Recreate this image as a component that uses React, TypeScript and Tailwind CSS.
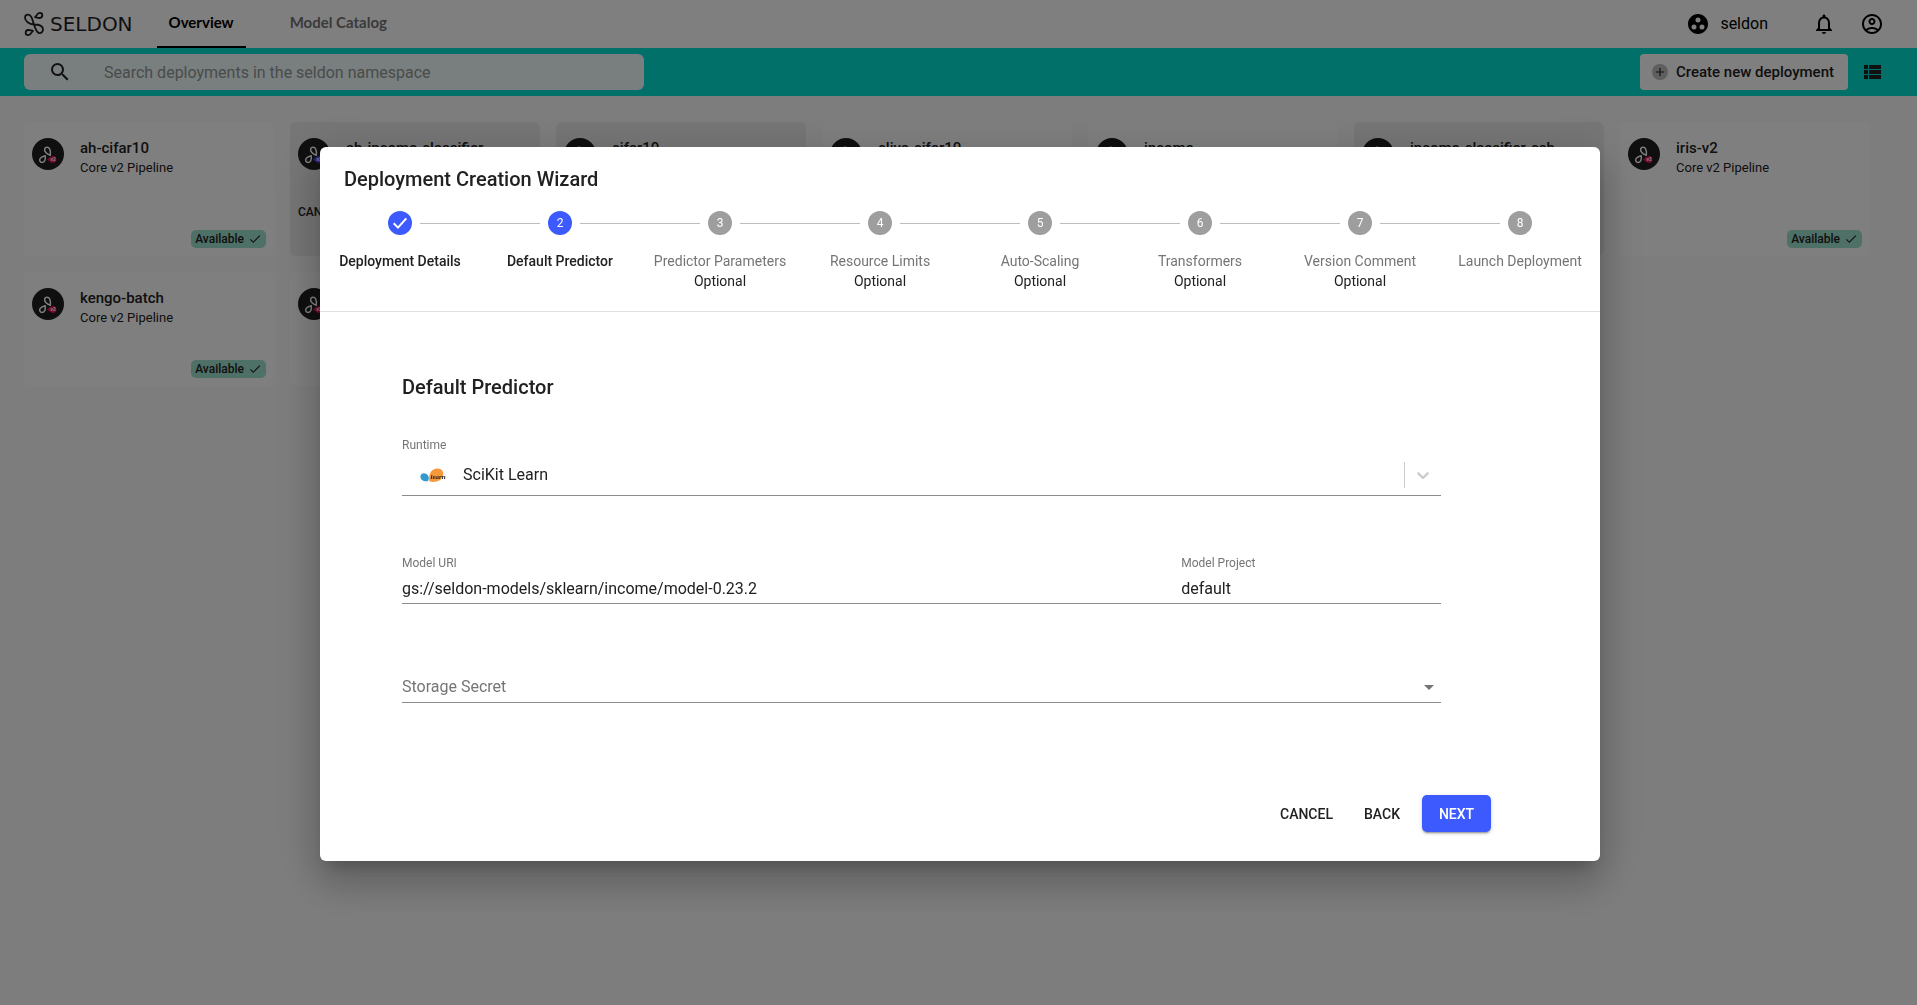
import { useState } from 'react';
import {
  MdAdd,
  MdArrowDropDown,
  MdCheck,
  MdGroupWork,
  MdNotificationsNone,
  MdOutlineAccountCircle,
  MdSearch,
} from 'react-icons/md';

type Deployment = {
  name: string;
  kind: string;
  accent: string;
  shaded?: boolean;
  canary?: boolean;
};

const DEPLOYMENTS: Deployment[] = [
  { name: 'ah-cifar10', kind: 'Core v2 Pipeline', accent: '#e8145a' },
  { name: 'ah-income-classifier', kind: 'Seldon Deployment', accent: '#4a4aff', shaded: true, canary: true },
  { name: 'cifar10', kind: 'Seldon Deployment', accent: '#4a4aff', shaded: true },
  { name: 'clive-cifar10', kind: 'Core v2 Pipeline', accent: '#e8145a' },
  { name: 'income', kind: 'Core v2 Pipeline', accent: '#e8145a' },
  { name: 'income-classifier-csh', kind: 'Seldon Deployment', accent: '#4a4aff', shaded: true },
  { name: 'iris-v2', kind: 'Core v2 Pipeline', accent: '#e8145a' },
  { name: 'kengo-batch', kind: 'Core v2 Pipeline', accent: '#e8145a' },
  { name: 'kengo', kind: 'Core v2 Pipeline', accent: '#e8145a' },
];

const STEPS = [
  { label: 'Deployment Details', optional: false },
  { label: 'Default Predictor', optional: false },
  { label: 'Predictor Parameters', optional: true },
  { label: 'Resource Limits', optional: true },
  { label: 'Auto-Scaling', optional: true },
  { label: 'Transformers', optional: true },
  { label: 'Version Comment', optional: true },
  { label: 'Launch Deployment', optional: false },
];

function Logo() {
  return (
    <a href="#" className="flex items-center gap-1.5 text-[#1f1f1f]">
      <svg width="20" height="24" viewBox="0 0 20 24" fill="none" stroke="currentColor" strokeWidth="1.8">
        <path d="M10.5 5.2C13.5 4.4 12.4 .9 15.7 .9C19.2 .9 19.2 5.6 15.7 6C13.6 6.1 12.6 5.2 10.5 5.2Z" />
        <path d="M10 12.5C5 12.5 1 9 1 5.5C1 2.8 3.5 2 5.5 3C8.5 4.6 8.5 9 10 12.5C11.5 17 12.3 20.5 15 21C17.5 21.4 19 19.5 19 17.5C19 14 15 12.5 10 12.5Z" />
        <path d="M9.5 18.9C6.5 19.8 7.6 23.1 4.3 23.1C.8 23.1 .8 18.4 4.3 18C6.4 17.9 7.4 18.8 9.5 18.9Z" />
      </svg>
      <span className="font-['DejaVu_Sans',sans-serif] text-[20px] leading-6">SELDON</span>
    </a>
  );
}

function PipelineIcon({ accent }: { accent: string }) {
  return (
    <svg width="32" height="32" viewBox="0 0 32 32" className="shrink-0">
      <circle cx="16" cy="16" r="16" fill="#1f1f1f" />
      <g fill="none" stroke="#fff" strokeWidth="1.5" strokeLinejoin="round">
        <path d="M18.3 17.2C14.6 16 12 13.2 12.7 10.8C13.4 8.6 16.6 8.7 17.7 11C18.4 12.6 18.5 15 18.3 17.2Z" />
        <path d="M13.2 17.7C13.9 21.6 12.6 24.4 10.2 24.4C7.8 24.4 7 22 8.2 20.4C9.2 19 11.2 18.1 13.2 17.7Z" />
      </g>
      <path d="M15 21.5C17 20.4 18.4 18 21 18C23.2 18 24.4 19.6 24.4 21.5C24.4 23.4 23.2 25 21 25C18.4 25 17 22.6 15 21.5Z" fill={accent} />
      <text x="18.4" y="23.2" fontSize="5" fontWeight="700" fill="#fff">v2</text>
    </svg>
  );
}

function ScikitIcon() {
  return (
    <svg width="27" height="15" viewBox="0 0 27 15" className="shrink-0">
      <path d="M1.3 6.3C3.4 4.2 6.8 5.4 8.2 7.8C9.3 9.8 8.8 11.8 8 13C5.6 13.8 2.8 13 1.3 11.2C0 9.4 .1 7.6 1.3 6.3Z" fill="#3499cd" />
      <path d="M9.4 13.2C8.6 9 9.6 4.6 12.4 2.2C15.6-.4 20.4-.2 22.4 2.8C24.6 6.2 22.6 10.8 19.2 12.6C16.2 14.2 11.8 14.2 9.4 13.2Z" fill="#f89939" />
      <text x="10.5" y="10.8" fontSize="7" fontWeight="700" fontStyle="italic" fontFamily="Liberation Serif, serif" fill="#1f1f1f">learn</text>
    </svg>
  );
}

function DeploymentCard({ deployment }: { deployment: Deployment }) {
  return (
    <article
      className={`flex min-h-[114px] flex-col rounded-md px-2 pt-4 pb-2 ${
        deployment.shaded ? 'bg-[#ececec]' : 'bg-white'
      }`}
    >
      <div className="flex h-[42px] gap-4">
        <PipelineIcon accent={deployment.accent} />
        <div>
          <h2 className="mb-0.5 text-[15px] leading-5 font-medium whitespace-nowrap">{deployment.name}</h2>
          <p className="text-[13px] leading-4">{deployment.kind}</p>
        </div>
      </div>
      {deployment.canary && <p className="mt-[22px] mb-2 text-xs leading-5 font-medium">CANARY</p>}
      <span className="mt-auto flex items-center gap-1 self-end rounded-[5px] bg-[#9ee0cc] px-1 text-xs leading-[18px] font-medium">
        Available
        <MdCheck size={14} />
      </span>
    </article>
  );
}

function Stepper({ active }: { active: number }) {
  return (
    <ol className="grid grid-cols-8">
      {STEPS.map((step, i) => {
        const reached = i <= active;
        return (
          <li key={step.label} className="flex flex-col items-center">
            <div className="flex w-full items-center gap-2">
              <span className={`h-px flex-1 ${i > 0 ? 'bg-[#bdbdbd]' : ''}`} />
              <span
                className={`flex size-6 items-center justify-center rounded-full text-xs text-white ${
                  reached ? 'bg-[#3d5afe]' : 'bg-[#9e9e9e]'
                }`}
              >
                {i < active ? (
                  <svg width="24" height="24" viewBox="0 0 24 24" fill="none" stroke="currentColor" strokeWidth="2">
                    <path d="M5.7 12.3L10 16.6L18.3 7.4" />
                  </svg>
                ) : (
                  i + 1
                )}
              </span>
              <span className={`h-px flex-1 ${i < STEPS.length - 1 ? 'bg-[#bdbdbd]' : ''}`} />
            </div>
            <span className={`mt-4 text-sm leading-5 ${reached ? 'font-medium' : 'text-[#757575]'}`}>{step.label}</span>
            {step.optional && <span className="text-sm leading-5">Optional</span>}
          </li>
        );
      })}
    </ol>
  );
}

function Wizard() {
  const [runtime, setRuntime] = useState('sklearn');
  const [modelUri, setModelUri] = useState('gs://seldon-models/sklearn/income/model-0.23.2');
  const [project, setProject] = useState('default');
  const [secret, setSecret] = useState('');

  return (
    <section
      role="dialog"
      aria-labelledby="wizard-title"
      className="w-full max-w-[1280px] rounded-md bg-white shadow-[0_11px_15px_-7px_rgba(0,0,0,0.2),0_24px_38px_3px_rgba(0,0,0,0.14),0_9px_46px_8px_rgba(0,0,0,0.12)]"
    >
      <header className="border-b border-[#e0e0e0] pt-4 pb-5">
        <h1 id="wizard-title" className="mb-4 px-6 text-xl leading-8 font-medium">
          Deployment Creation Wizard
        </h1>
        <Stepper active={1} />
      </header>

      <form className="pr-[109px] pb-[29px] pl-[82px]" onSubmit={(e) => e.preventDefault()}>
        <div className="mr-[50px] pt-[59px]">
          <h2 className="text-xl leading-8 font-medium">Default Predictor</h2>

          <div className="mt-8 border-b border-[#8c8c8c]">
            <label htmlFor="runtime" className="block text-xs leading-5 text-[#757575]">Runtime</label>
            <div className="relative flex h-10 items-center pl-[18px]">
              <ScikitIcon />
              <select
                id="runtime"
                value={runtime}
                onChange={(e) => setRuntime(e.target.value)}
                className="h-full flex-1 appearance-none pl-4 text-base outline-none"
              >
                <option value="sklearn">SciKit Learn</option>
              </select>
              <div className="pointer-events-none absolute right-0 flex h-[26px] items-center border-l border-[#ccc] px-2">
                <svg width="20" height="20" viewBox="0 0 20 20" fill="#ccc">
                  <path d="M4.516 7.548c0.436-0.446 1.043-0.481 1.576 0l3.908 3.747 3.908-3.747c0.533-0.481 1.141-0.446 1.574 0 0.436 0.445 0.408 1.197 0 1.615-0.406 0.418-4.695 4.502-4.695 4.502-0.217 0.223-0.502 0.335-0.787 0.335s-0.57-0.112-0.789-0.335c0 0-4.287-4.084-4.695-4.502s-0.436-1.17 0-1.615z" />
                </svg>
              </div>
            </div>
          </div>

          <div className="mt-[57px] grid grid-cols-4 border-b border-[#8c8c8c]">
            <div className="col-span-3">
              <label htmlFor="model-uri" className="block text-xs leading-5 text-[#757575]">Model URI</label>
              <input
                id="model-uri"
                value={modelUri}
                onChange={(e) => setModelUri(e.target.value)}
                className="block h-[30px] w-full text-base outline-none"
              />
            </div>
            <div>
              <label htmlFor="model-project" className="block text-xs leading-5 text-[#757575]">Model Project</label>
              <input
                id="model-project"
                value={project}
                onChange={(e) => setProject(e.target.value)}
                className="block h-[30px] w-full text-base outline-none"
              />
            </div>
          </div>

          <div className="relative mt-[68px] flex items-center border-b border-[#8c8c8c]">
            <select
              aria-label="Storage Secret"
              value={secret}
              onChange={(e) => setSecret(e.target.value)}
              className="h-[30px] w-full appearance-none text-base text-[#757575] outline-none"
            >
              <option value="">Storage Secret</option>
            </select>
            <MdArrowDropDown size={24} className="pointer-events-none absolute right-0 text-[#757575]" />
          </div>
        </div>

        <div className="mt-[92px] flex items-center justify-end gap-2 text-sm font-medium">
          <button type="button" className="h-[37px] min-w-[71px] px-2">CANCEL</button>
          <button type="button" className="h-[37px] min-w-16 px-2">BACK</button>
          <button
            type="submit"
            className="h-[37px] min-w-[69px] rounded-[5px] bg-[#3d5afe] px-4 text-white shadow-[0_3px_1px_-2px_rgba(0,0,0,0.2),0_2px_2px_0_rgba(0,0,0,0.14),0_1px_5px_0_rgba(0,0,0,0.12)]"
          >
            NEXT
          </button>
        </div>
      </form>
    </section>
  );
}

export default function App() {
  const [query, setQuery] = useState('');

  return (
    <div className="min-h-screen bg-[#fafafa] font-['Roboto',sans-serif] text-[#212121]">
      <header className="flex h-12 items-center bg-white pr-[33px] pl-6">
        <Logo />
        <nav className="ml-6 flex h-full font-['Lato',sans-serif] text-[15px] font-bold">
          <a href="#" className="flex items-center border-b-2 border-black px-3 pb-0.5 text-black">Overview</a>
          <a href="#" className="ml-8 flex items-center border-b-2 border-transparent px-3 pb-0.5 text-[#757575]">
            Model Catalog
          </a>
        </nav>
        <div className="ml-auto flex items-center text-black">
          <MdGroupWork size={24} />
          <span className="ml-2.5 text-base">seldon</span>
          <button aria-label="Notifications" className="ml-11">
            <MdNotificationsNone size={24} />
          </button>
          <button aria-label="Account" className="ml-6">
            <MdOutlineAccountCircle size={24} />
          </button>
        </div>
      </header>

      <div className="flex h-12 items-center bg-[#00e1d2] pr-[33px] pl-6">
        <label className="flex h-9 w-full max-w-[620px] items-center rounded-md bg-white/95 pl-6">
          <MdSearch size={24} />
          <input
            value={query}
            onChange={(e) => setQuery(e.target.value)}
            placeholder="Search deployments in the seldon namespace"
            aria-label="Search deployments"
            className="ml-8 flex-1 pt-0.5 text-base outline-none placeholder:text-[#939797]"
          />
        </label>
        <button className="ml-auto flex h-9 items-center gap-2 rounded bg-white pr-3.5 pl-3 text-[15px] font-medium">
          <span className="flex size-4 items-center justify-center rounded-full bg-[#bdbdbd]">
            <MdAdd size={14} />
          </span>
          Create new deployment
        </button>
        <button aria-label="List view" className="ml-3">
          <svg width="24" height="24" viewBox="0 0 24 24" fill="currentColor">
            <path d="M4 14h4v-4H4v4zm0 5h4v-4H4v4zM4 9h4V5H4v4zm5 5h12v-4H9v4zm0 5h12v-4H9v4zM9 5v4h12V5H9z" />
          </svg>
        </button>
      </div>

      <main className="grid grid-cols-7 gap-4 pt-[26px] pr-[47px] pl-6">
        {DEPLOYMENTS.map((d) => (
          <DeploymentCard key={d.name} deployment={d} />
        ))}
      </main>

      {/* Backdrop + wizard */}
      <div className="fixed inset-0 flex items-center justify-center bg-black/50 pt-[3px] pl-[3px]">
        <Wizard />
      </div>
    </div>
  );
}
